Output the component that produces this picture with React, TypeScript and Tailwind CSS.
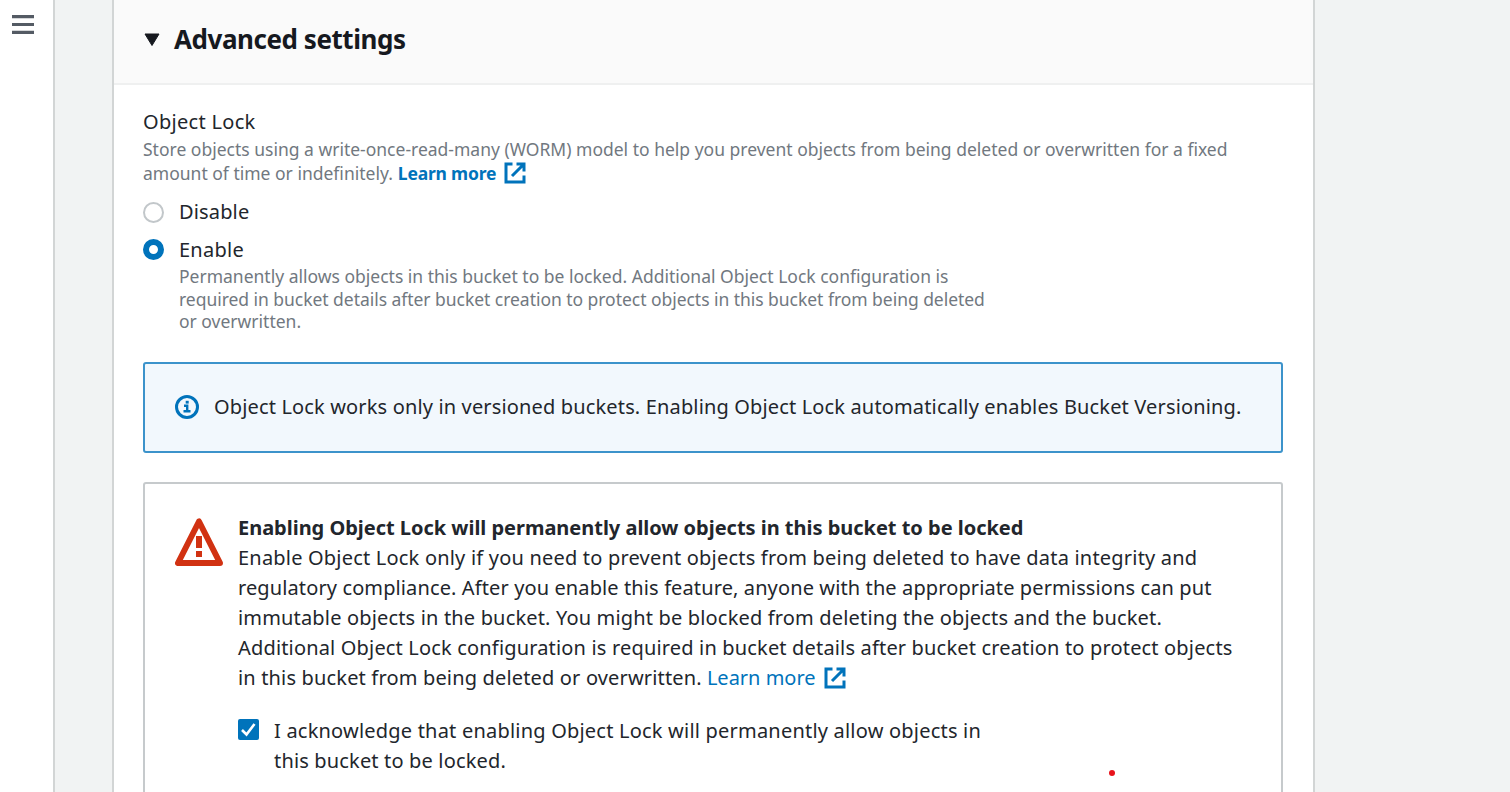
import type { ReactNode } from "react";

function ExternalIcon({ className = "" }: { className?: string }) {
  return (
    <svg className={`h-[22px] w-[22px] shrink-0 ${className}`} viewBox="0 0 22 22" fill="none" stroke="#0073bb" strokeWidth="3">
      <path d="M8.500 2H2v18h18v-6.500" />
      <path d="M12.500 2H20v7.500M19.500 2.500 8 14" />
    </svg>
  );
}

function Line({ children, className = "" }: { children: ReactNode; className?: string }) {
  return <span className={`block whitespace-nowrap ${className}`}>{children}</span>;
}

export default function App() {
  return (
    <div className="flex h-[792px] w-[1510px] overflow-hidden bg-[#f1f3f3] font-['Noto_Sans',sans-serif] text-xl/[30px] text-[#22262c]">
      <nav className="flex w-[55px] shrink-0 justify-center border-r-2 border-[#d2d5d5] bg-white pt-[15px] pr-[7px]">
        <svg className="h-5 w-[22px]" viewBox="0 0 22 20" fill="#545b64">
          <path d="M0 0h22v3.300H0zM0 7.900h22v3.200H0zM0 15.700h22v3.300H0z" />
        </svg>
      </nav>
      <main className="ml-[57px] flex w-[1203px] shrink-0 flex-col border-x-2 border-[#d2d5d5] bg-white">
        <header className="flex h-[85px] shrink-0 items-center gap-3.5 border-b-2 border-[#eff0f0] bg-[#fafafa] pb-1 pl-[30px]">
          <svg className="h-3.5 w-4" viewBox="0 0 16 14">
            <path d="M1 1h14L8 12.500z" fill="#16191f" stroke="#16191f" strokeLinejoin="round" />
          </svg>
          <Line className="-mt-px text-[26px] font-bold tracking-[-0.45px] text-[#16191f]">Advanced settings</Line>
        </header>

        <section className="flex flex-col px-[29px] pt-[22px]">
          <Line className="tracking-[0.3px]">Object Lock</Line>
          <div className="text-[17.5px]/6 text-[#717880]">
            <Line>Store objects using a write-once-read-many (WORM) model to help you prevent objects from being deleted or overwritten for a fixed</Line>
            <div className="flex items-center">
              <Line>amount of time or indefinitely.</Line>
              <a className="ml-[5px] flex items-center gap-2 font-bold tracking-[-0.2px] text-[#0073bb]">
                <Line>Learn more</Line>
                <ExternalIcon />
              </a>
            </div>
          </div>

          <div className="mt-3 flex items-center gap-[15px]">
            <span className="size-[21px] rounded-full border-2 border-[#c2c7ca] bg-white" />
            <Line className="tracking-[0.15px]">Disable</Line>
          </div>
          <div className="mt-2 flex gap-[15px]">
            <span className="mt-[4px] size-[21px] shrink-0 rounded-full border-[6px] border-[#0073bb] bg-white" />
            <div>
              <Line className="tracking-[0.25px]">Enable</Line>
              <div className="text-[17.5px]/[22.5px] text-[#717880]">
                <Line>Permanently allows objects in this bucket to be locked. Additional Object Lock configuration is</Line>
                <Line className="tracking-[-0.04px]">required in bucket details after bucket creation to protect objects in this bucket from being deleted</Line>
                <Line>or overwritten.</Line>
              </div>
            </div>
          </div>

          <div className="mt-[29px] flex h-[91px] w-[1140px] items-center gap-[15px] rounded-[3px] border-2 border-[#3c93cb] bg-[#f2f8fd] pl-[30px]">
            <svg className="size-6" viewBox="0 0 24 24" fill="none" stroke="#0073bb">
              <circle cx="12" cy="12" r="10.500" strokeWidth="3" />
              <path d="M9 10.800h3.200V16M8.500 16.300h7" strokeWidth="2.400" />
              <path d="M12.200 5.800v2.800" strokeWidth="3" />
            </svg>
            <Line className="tracking-[0.15px]">Object Lock works only in versioned buckets. Enabling Object Lock automatically enables Bucket Versioning.</Line>
          </div>

          <div className="relative mt-[29px] flex h-[400px] w-[1140px] gap-[15px] rounded-[3px] border-2 border-[#c6cacc] pt-[29px] pl-[30px]">
            <svg className="mt-[5px] h-12 w-12 shrink-0" viewBox="0 0 48 48" fill="none" stroke="#d13212">
              <path d="M24 3.500 3 45h42z" strokeWidth="6" strokeLinejoin="round" />
              <path d="M24 18v12M24 33v6" strokeWidth="6" />
            </svg>
            <div>
              <Line className="font-bold tracking-[-0.02px]">Enabling Object Lock will permanently allow objects in this bucket to be locked</Line>
              <Line className="tracking-[0.2px]">Enable Object Lock only if you need to prevent objects from being deleted to have data integrity and</Line>
              <Line className="tracking-[0.114px]">regulatory compliance. After you enable this feature, anyone with the appropriate permissions can put</Line>
              <Line className="tracking-[0.165px]">immutable objects in the bucket. You might be blocked from deleting the objects and the bucket.</Line>
              <Line className="tracking-[0.168px]">Additional Object Lock configuration is required in bucket details after bucket creation to protect objects</Line>
              <div className="flex items-center">
                <Line className="tracking-[0.165px]">in this bucket from being deleted or overwritten.</Line>
                <a className="ml-[5px] flex items-center gap-2 text-[#0073bb]">
                  <Line>Learn more</Line>
                  <ExternalIcon />
                </a>
              </div>
              <div className="mt-[22px] flex gap-[15px]">
                <span className="mt-[4px] flex size-[21px] shrink-0 items-center justify-center rounded-xs bg-[#0073bb]">
                  <svg className="h-[15px] w-[15px]" viewBox="0 0 15 15" fill="none" stroke="#fff" strokeWidth="2.600">
                    <path d="m1 8 4.500 4.500L13.500 2" />
                  </svg>
                </span>
                <div className="pt-px">
                  <Line className="tracking-[0.208px]">I acknowledge that enabling Object Lock will permanently allow objects in</Line>
                  <Line className="tracking-[0.16px]">this bucket to be locked.</Line>
                </div>
              </div>
            </div>
            <span className="absolute top-[286px] left-[964px] size-1.5 rounded-full bg-[#e8131b]" />
          </div>
        </section>
      </main>
    </div>
  );
}
